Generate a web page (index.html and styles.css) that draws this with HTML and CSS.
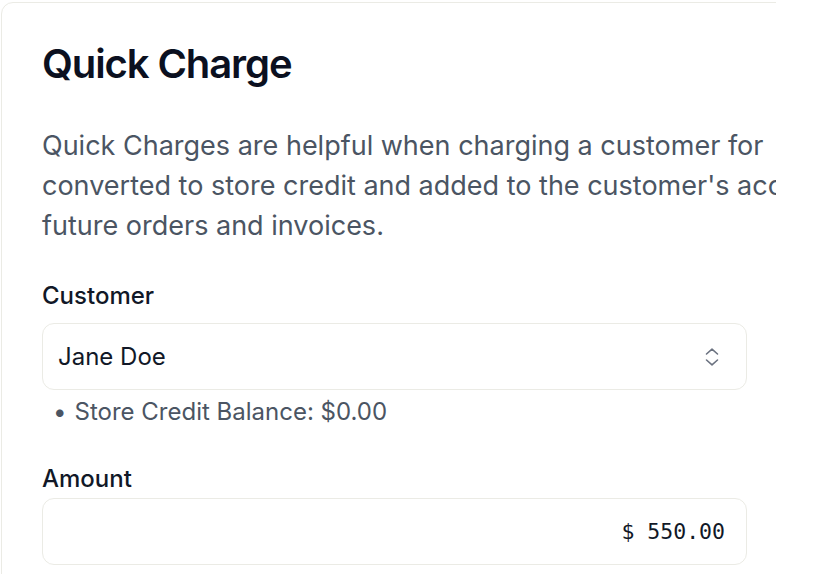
FILE: index.html
```html
<!DOCTYPE html>
<html>
<head>
<meta charset="utf-8">
<link rel="stylesheet" href="styles.css">
</head>
<body>
<div class="viewport">
  <div class="card">
    <h1 class="title">Quick Charge</h1>
    <p class="intro">Quick Charges are helpful when charging a customer for<br>converted to store credit and added to the customer's account to be used toward<br>future orders and invoices.</p>
    <div class="field">
      <label class="label">Customer</label>
      <div class="select">
        <span class="select-value">Jane Doe</span>
        <svg class="chevrons" width="14" height="18" viewBox="0 0 14 18" fill="none" stroke="currentColor" stroke-width="1.6" stroke-linecap="round" stroke-linejoin="round"><polyline points="1.5,6 7,1.2 12.5,6"/><polyline points="1.5,12 7,16.8 12.5,12"/></svg>
      </div>
      <ul class="hints"><li>Store Credit Balance: $0.00</li></ul>
    </div>
    <div class="field field-amount">
      <label class="label">Amount</label>
      <div class="input"><span class="amount">$ 550.00</span></div>
    </div>
  </div>
</div>
</body>
</html>
```
FILE: styles.css
```css
* { box-sizing: border-box; }
html, body { margin: 0; padding: 0; background: #ffffff; }
body { font-family: Inter, "Noto Sans", sans-serif; }
.viewport {
  width: 776px;
  height: 574px;
  overflow: hidden;
  padding: 2px 0 0 1px;
}
.card {
  width: 820px;
  border: 1px solid #ebebe5;
  border-radius: 12px;
  padding: 37px 40px 40px 40px;
  background: #fff;
}
.title {
  margin: 0;
  font-size: 40px;
  line-height: 48px;
  font-weight: 600;
  letter-spacing: -1.1px;
  color: #0b1020;
}
.intro {
  margin: 38px 0 0 0;
  white-space: nowrap;
  font-size: 27px;
  line-height: 40px;
  color: #4b5563;
}
.field { margin-top: 34px; width: 705px; }
.field-amount { margin-top: 35px; }
.label {
  display: block;
  font-size: 24px;
  line-height: 32px;
  font-weight: 500;
  color: #111827;
  margin-bottom: 11px;
}
.field-amount .label { margin-bottom: 3px; }
.select, .input {
  height: 67px;
  border: 1px solid #ebebe5;
  border-radius: 12px;
  display: flex;
  align-items: center;
  padding: 0 27px 0 15px;
  background: #fff;
}
.select { justify-content: space-between; }
.select-value { font-size: 24px; color: #111827; }
.chevrons { color: #6b7280; }
.hints {
  margin: 6px 0 0 0;
  padding: 0 0 0 11px;
  list-style: none;
  font-size: 24px;
  line-height: 32px;
  color: #4b5563;
}
.hints li::before { content: "\2022"; margin-right: 8px; }
.input { justify-content: flex-end; padding-right: 21px; }
.amount {
  font-family: "DejaVu Sans Mono", monospace;
  font-size: 21.5px;
  color: #111827;
}
```
